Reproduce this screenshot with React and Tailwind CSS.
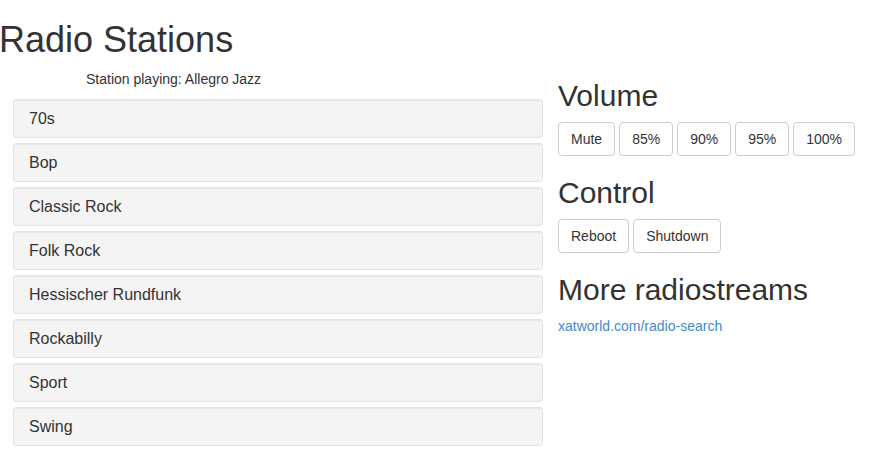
import React from 'react';

const stations = ['70s', 'Bop', 'Classic Rock', 'Folk Rock', 'Hessischer Rundfunk', 'Rockabilly', 'Sport', 'Swing'];
const volumes = ['Mute', '85%', '90%', '95%', '100%'];

function Btn({ children }) {
  return (
    <button className="h-[34px] px-3 border border-[#ccc] rounded bg-white text-[14px] text-[#333] leading-5">
      {children}
    </button>
  );
}

export default function App() {
  return (
    <div className="w-[876px] h-[469px] bg-white text-[#333] font-['Liberation_Sans',Arial,sans-serif] overflow-hidden">
      <h1 className="mt-5 -ml-px text-[36px] leading-[39.6px]">Radio Stations</h1>

      <div className="flex">
        {/* stations list */}
        <div className="w-[530px] ml-[13px]">
          <div className="mt-[9.4px] pl-[73px] text-[14px] leading-5">Station playing: Allegro Jazz</div>
          <div className="mt-[10px] flex flex-col gap-[5px]">
            {stations.map((s) => (
              <div
                key={s}
                className="h-[39px] flex items-center pt-[2px] px-[15px] bg-[#f4f4f4] border border-[#e3e3e3] rounded-[3px] shadow-[inset_0_1px_1px_rgba(0,0,0,0.05)] text-[16px]"
              >
                {s}
              </div>
            ))}
          </div>
        </div>

        {/* right side */}
        <div className="ml-[15px] flex flex-col">
          <h2 className="mt-[19.4px] mb-[10px] text-[30px] leading-[33px]">Volume</h2>
          <div className="flex gap-1">
            {volumes.map((v) => (
              <Btn key={v}>{v}</Btn>
            ))}
          </div>

          <h2 className="mt-5 mb-[10px] text-[30px] leading-[33px]">Control</h2>
          <div className="flex gap-1">
            <Btn>Reboot</Btn>
            <Btn>Shutdown</Btn>
          </div>

          <h2 className="mt-5 mb-[10px] text-[30px] leading-[33px]">More radiostreams</h2>
          <a href="#" className="text-[14px] leading-5 text-[#428bca]">xatworld.com/radio-search</a>
        </div>
      </div>
    </div>
  );
}
